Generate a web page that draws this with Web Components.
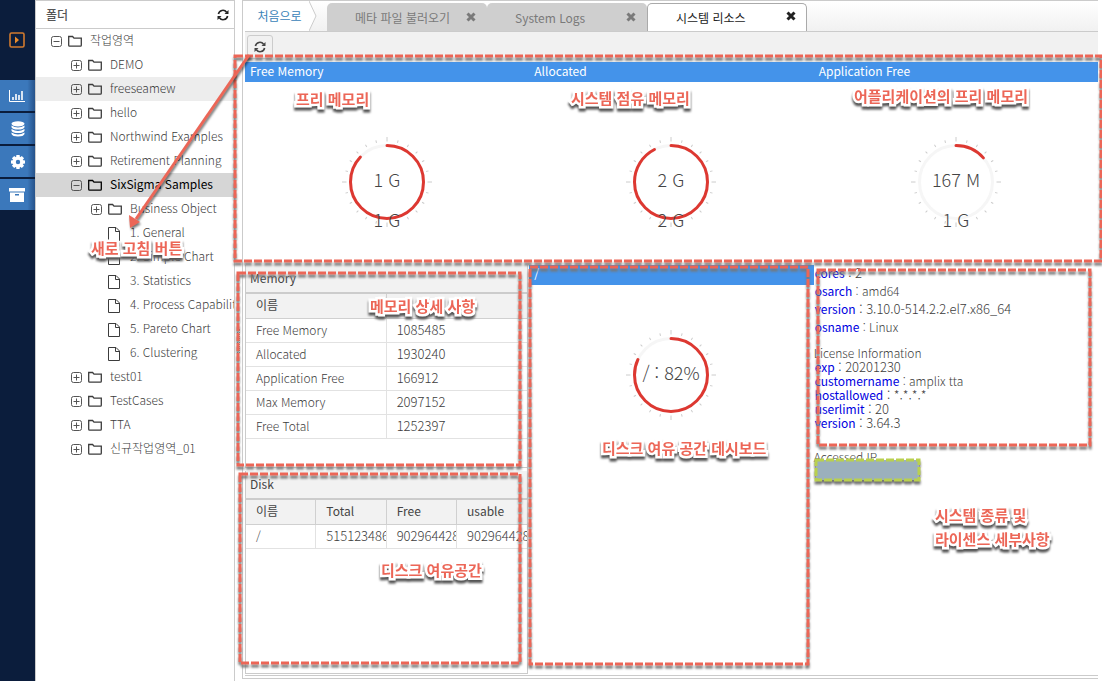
<!DOCTYPE html>
<html lang="ko">
<head>
<meta charset="utf-8">
<title>시스템 리소스</title>
<style>
html, body { margin: 0; height: 100%; }
body {
  font: 12px/18px "Noto Sans CJK KR", sans-serif;
  font-weight: 300;
  color: #3c3c3c;
  background: #fff;
  overflow: hidden;
  --line: #cbcbcb;
  --blue: #4493ea;
}
</style>
</head>
<body>
<app-shell>
  <nav-rail slot="rail"></nav-rail>
  <folder-panel slot="side">
    <tree-row level="0" open>작업영역</tree-row>
    <tree-row level="1">DEMO</tree-row>
    <tree-row level="1" hovered>freeseamew</tree-row>
    <tree-row level="1">hello</tree-row>
    <tree-row level="1">Northwind Examples</tree-row>
    <tree-row level="1">Retirement Planning</tree-row>
    <tree-row level="1" open selected>SixSigma Samples</tree-row>
    <tree-row level="2">Business Object</tree-row>
    <tree-row level="2" file>1. General</tree-row>
    <tree-row level="2" file>2. Simple Chart</tree-row>
    <tree-row level="2" file>3. Statistics</tree-row>
    <tree-row level="2" file>4. Process Capability</tree-row>
    <tree-row level="2" file>5. Pareto Chart</tree-row>
    <tree-row level="2" file>6. Clustering</tree-row>
    <tree-row level="1">test01</tree-row>
    <tree-row level="1">TestCases</tree-row>
    <tree-row level="1">TTA</tree-row>
    <tree-row level="1">신규작업영역_01</tree-row>
  </folder-panel>
  <tab-strip slot="tabs">
    <tab-item>메타 파일 불러오기</tab-item>
    <tab-item>System Logs</tab-item>
    <tab-item active>시스템 리소스</tab-item>
  </tab-strip>
  <tool-bar slot="tools"></tool-bar>
  <resource-view slot="view">
    <gauge-card slot="top" heading="Free Memory" value="0.87" main="1 G" sub="1 G"></gauge-card>
    <gauge-card slot="top" heading="Allocated" value="0.925" main="2 G" sub="2 G"></gauge-card>
    <gauge-card slot="top" heading="Application Free" value="0.135" main="167 M" sub="1 G"></gauge-card>
    <data-panel slot="left" class="memory" heading="Memory" columns="이름|" widths="50|50"
      rows="Free Memory|1085485;Allocated|1930240;Application Free|166912;Max Memory|2097152;Free Total|1252397"></data-panel>
    <data-panel slot="left" class="disk" heading="Disk" columns="이름|Total|Free|usable" widths="25|25|25|25"
      rows="/|51512348672|9029644288|9029644288"></data-panel>
    <gauge-card slot="middle" class="disk" heading="/" value="0.82" main="/ : 82%"></gauge-card>
    <system-info slot="right"></system-info>
  </resource-view>
  <note-layer slot="notes"></note-layer>
</app-shell>

<script>
function define(name, html, setup) {
  const template = document.createElement('template');
  template.innerHTML = html;
  customElements.define(name, class extends HTMLElement {
    constructor() {
      super();
      this.attachShadow({ mode: 'open' }).append(template.content.cloneNode(true));
    }
    connectedCallback() {
      if (setup && !this.ready) { this.ready = true; setup(this, this.shadowRoot); }
    }
  });
}

const refresh = `<svg width="12" height="12" viewBox="0 0 12 12" fill="none" stroke="currentColor" stroke-width="1.6" aria-hidden="true">
  <path d="M1.4 5A4.6 4.6 0 0 1 9.6 3.2M10.6 7A4.6 4.6 0 0 1 2.4 8.8"/>
  <path d="M11.5 1V5H7.5ZM.5 11V7H4.5Z" fill="currentColor" stroke="none"/></svg>`;

define('app-shell', `
<style>
:host { display: flex; position: relative; height: 100vh; overflow: hidden; }
.split { width: 7px; flex: none; display: flex; align-items: center; justify-content: center; }
.split i { width: 1px; height: 24px; border-left: 1px dotted #888; border-right: 1px dotted #888; }
main { flex: 1; min-width: 0; display: flex; flex-direction: column; box-sizing: border-box;
  border: 1px solid var(--line); border-right: 0; padding: 0 0 2px 2px; margin: 0 4px 2px 0; }
.view { flex: 1; min-height: 0; display: flex; border-bottom: 1px solid var(--line); }
</style>
<slot name="rail"></slot>
<slot name="side"></slot>
<div class="split"><i></i></div>
<main>
  <slot name="tabs"></slot>
  <slot name="tools"></slot>
  <div class="view"><slot name="view"></slot></div>
</main>
<slot name="notes"></slot>`);

define('nav-rail', `
<style>
:host { display: block; width: 35px; flex: none; background: #0b1d3c; }
nav { display: flex; flex-direction: column; gap: 2px; }
button { display: flex; align-items: center; justify-content: center; width: 100%; height: 31px; border: 0; padding: 0;
  color: #fff; background: linear-gradient(90deg, #3b78bb 0 78%, #26528a 100%); }
svg[width="16"] { margin-right: 1px; }
.run { height: 80px; background: none; margin-bottom: -2px; }
</style>
<nav aria-label="메뉴">
  <button class="run" aria-label="실행"><svg width="16" height="16" fill="none" stroke="#d17a2e" stroke-width="1.6"><rect x="1" y="1" width="14" height="14" rx="1.5"/><path d="M6 4.5V11.5L10 8Z" fill="#e88a2c" stroke="none"/></svg></button>
  <button aria-label="차트"><svg width="16" height="14" fill="none" stroke="#fff" stroke-width="1"><path d="M.5 1V12.5H16"/><path stroke-width="1.6" d="M4 8V11M7 5V11M10 6V11M13 2V11"/></svg></button>
  <button aria-label="데이터"><svg width="14" height="16" fill="#fff"><ellipse cx="7" cy="2.8" rx="6.5" ry="2.6"/><path d="M.5 4.4Q7 8.4 13.5 4.4V6.3Q12.5 8.6 7 8.6T.5 6.3ZM.5 7.9Q7 11.9 13.5 7.9V9.8Q12.5 12.1 7 12.1T.5 9.8ZM.5 11.4Q7 15.4 13.5 11.4V13.1Q12.5 15.6 7 15.6T.5 13.1Z"/></svg></button>
  <button aria-label="설정"><svg width="14" height="14" viewBox="-7 -7 14 14"><g fill="#fff"><path d="M-1.6 -7H1.6L2 -4H-2Z"/><path d="M-1.6 -7H1.6L2 -4H-2Z" transform="rotate(45)"/><path d="M-1.6 -7H1.6L2 -4H-2Z" transform="rotate(90)"/><path d="M-1.6 -7H1.6L2 -4H-2Z" transform="rotate(135)"/><path d="M-1.6 -7H1.6L2 -4H-2Z" transform="rotate(180)"/><path d="M-1.6 -7H1.6L2 -4H-2Z" transform="rotate(225)"/><path d="M-1.6 -7H1.6L2 -4H-2Z" transform="rotate(270)"/><path d="M-1.6 -7H1.6L2 -4H-2Z" transform="rotate(315)"/></g><circle r="3.7" fill="none" stroke="#fff" stroke-width="3"/></svg></button>
  <button aria-label="보관함"><svg width="16" height="14" fill="#fff"><path d="M0 0H16V3.5H0ZM1 4.5H15V14H1ZM6 6V7.5H10V6Z" fill-rule="evenodd"/></svg></button>
</nav>`);

define('folder-panel', `
<style>
:host { display: flex; flex-direction: column; box-sizing: border-box; width: 200px; flex: none; overflow: hidden;
  border: 1px solid var(--line); border-width: 1px 1px 0 1px; }
header { display: flex; align-items: center; justify-content: space-between; height: 27px; flex: none;
  padding: 0 5px 0 10px; border-bottom: 1px solid var(--line); }
h2 { margin: 0; font-size: 12px; font-weight: 500; color: #555; }
button { display: flex; border: 0; padding: 0; background: none; color: #222; }
</style>
<header><h2>폴더</h2><button aria-label="새로 고침">${refresh}</button></header>
<div role="tree"><slot></slot></div>`);

define('tree-row', `
<style>
:host { display: flex; align-items: center; height: 24px; box-sizing: border-box; padding-left: 14px; white-space: nowrap; }
:host([level="1"]) { padding-left: 34px; }
:host([level="2"]) { padding-left: 54px; }
:host([hovered]) { background: #ededed; }
:host([selected]) { background: #d6d6d6; color: #000; font-weight: 400; }
button { display: flex; width: 12px; height: 12px; border: 0; padding: 0; margin: 2px 6px 0 0; background: none; color: #555; }
svg { flex: none; }
.folder { width: 14px; margin-right: 8px; }
.page { display: none; width: 14px; margin: 2px 8px 0 18px; }
:host([file]) button, :host([file]) .folder, :host([open]) .v { display: none; }
:host([file]) .page { display: block; }
span { padding-bottom: 2px; }
</style>
<button aria-label="펼치기"><svg width="12" height="12" fill="none" stroke="currentColor"><rect x="1.5" y=".5" width="10" height="10" rx="2"/><path d="M3.5 5.5H9.5"/><path class="v" d="M6.5 2.5V8.5"/></svg></button>
<svg class="folder" height="12" viewBox="0 0 14 12" fill="none" stroke="currentColor" stroke-width="1.3"><path d="M.7 10.3V1.5H4.6L6 3.2H13.3V10.3Q13.3 11.2 12.4 11.2H1.6Q.7 11.2 .7 10.3Z"/></svg>
<svg class="page" height="14" viewBox="0 0 14 14" fill="none" stroke="currentColor"><path d="M.5 .5H8L11.5 4V13.5H.5ZM7.5 .5V4.5H11.5"/></svg>
<span role="treeitem"><slot></slot></span>`);

define('tab-strip', `
<style>
:host { display: flex; align-items: flex-end; height: 30px; flex: none; border-bottom: 1px solid var(--line);
  background: linear-gradient(#fff, #f1f1f1); }
a { display: flex; align-items: center; justify-content: center; align-self: stretch; width: 64px; padding-left: 5px;
  box-sizing: border-box; background: #fff; color: #3a83b8; font-weight: 400; text-decoration: none; }
svg { flex: none; width: 8px; height: 30px; margin-right: 10px; }
</style>
<a href="#">처음으로</a>
<svg fill="#fff" stroke="#ccc"><path d="M0 0L7 15L0 30"/></svg>
<slot></slot>`);

define('tab-item', `
<style>
:host { display: flex; align-items: center; box-sizing: border-box; width: 160px; height: 28px; padding: 2px 9px 0 0;
  border-radius: 5px 5px 0 0; background: #cfcfcf; color: #7a7a7a; font-weight: 400; }
:host([active]) { background: #fff; color: #222; border: 1px solid #aaa; border-bottom: 0; padding: 0 8px 0 0; }
span { flex: 1; padding-left: 28px; }
button { display: flex; border: 0; padding: 0 2px 3px 0; background: none; color: inherit; }
</style>
<span><slot></slot></span>
<button aria-label="닫기"><svg width="10" height="10" stroke="currentColor" stroke-width="3"><path d="M1.5 1.5L8.5 8.5M8.5 1.5L1.5 8.5"/></svg></button>`);

define('tool-bar', `
<style>
:host { display: flex; height: 30px; flex: none; background: #f1f1f1; padding: 0 2px; }
button { display: flex; align-items: center; justify-content: center; width: 26px; height: 24px; margin-top: 3px; padding: 0;
  border: 1px solid #ccc; border-radius: 3px; background: #f1f1f1; color: #444; }
</style>
<button aria-label="새로 고침">${refresh}</button>`);

define('resource-view', `
<style>
:host { flex: 1; min-width: 0; display: grid; grid-template: 203px minmax(0, 1fr) / repeat(3, minmax(0, 1fr)); }
.left { display: flex; flex-direction: column; gap: 3px; margin: 0 1px 1px 0; border-right: 1px solid var(--line); border-bottom: 1px solid var(--line); }
</style>
<slot name="top"></slot>
<div class="left"><slot name="left"></slot></div>
<slot name="middle"></slot>
<slot name="right"></slot>`);

define('gauge-card', `
<style>
:host { display: block; min-width: 0; }
h3 { margin: 0; height: 20px; line-height: 18px; padding-left: 5px; background: var(--blue); color: #fff; font-size: 12px; font-weight: 400; }
figure { display: flex; justify-content: center; margin: 54px 0 0; }
:host(.disk) figure { margin-top: 44px; }
svg { width: 92px; height: 92px; overflow: visible; }
text { font-size: 18px; fill: #444; text-anchor: middle; }
</style>
<h3></h3>
<figure><svg viewBox="-46 -46 92 92" fill="none">
  <g class="ticks" stroke="#ccc"></g>
  <circle r="36.5" stroke="#f6f6f6" stroke-width="3"/>
  <circle class="arc" r="36.5" stroke="#dd3831" stroke-width="3" stroke-linecap="round" pathLength="100" transform="rotate(-90)"/>
  <text class="main" y="5"></text><text class="sub" y="45"></text>
</svg></figure>`, (host, root) => {
  root.querySelector('h3').textContent = host.getAttribute('heading');
  root.querySelector('.main').textContent = host.getAttribute('main');
  root.querySelector('.sub').textContent = host.getAttribute('sub') || '';
  root.querySelector('.arc').setAttribute('stroke-dasharray', host.getAttribute('value') * 100 + ' 100');
  let ticks = '';
  for (let a = 0; a < 360; a += 15) ticks += `<path d="M0 -40.5V${a % 90 ? -43 : -45}" transform="rotate(${a})"/>`;
  root.querySelector('.ticks').innerHTML = ticks;
});

define('data-panel', `
<style>
:host { display: block; overflow: hidden; box-sizing: border-box; border-left: 1px solid var(--line); }
:host(.memory) { height: 203px; flex: none; border-bottom: 1px solid var(--line); }
:host(.disk) { flex: 1; }
h3 { margin: 0; height: 27px; box-sizing: border-box; line-height: 26px; padding-left: 4px; background: #f2f2f2; color: #444; font-size: 12px; font-weight: 400; }
table { width: 100%; table-layout: fixed; border-spacing: 0; border-top: 2px solid #ccc; }
th, td { box-sizing: border-box; height: 24px; padding: 0 0 2px 10px; line-height: 18px; text-align: left; font-weight: inherit; white-space: nowrap;
  overflow: hidden; border: solid #e2e2e2; border-width: 0 1px 1px 0; }
th { background: #f2f2f2; border-color: #d0d0d0; color: #444; height: 25px; font-weight: 400; }
td + td { font-size: 13px; }
th:last-child, td:last-child { border-right: 0; }
</style>
<h3></h3>
<table><colgroup></colgroup><thead><tr></tr></thead><tbody></tbody></table>`, (host, root) => {
  const list = (name) => host.getAttribute(name).split('|');
  root.querySelector('h3').textContent = host.getAttribute('heading');
  root.querySelector('colgroup').innerHTML = list('widths').map((w) => `<col style="width:${w}%">`).join('');
  root.querySelector('thead tr').innerHTML = list('columns').map((c) => `<th scope="col">${c}</th>`).join('');
  root.querySelector('tbody').innerHTML = host.getAttribute('rows').split(';')
    .map((r) => `<tr>${r.split('|').map((c) => `<td>${c}</td>`).join('')}</tr>`).join('');
});

define('system-info', `
<style>
:host { display: block; min-width: 0; }
p { margin: 0; line-height: 14px; }
dl { margin: 0; padding-left: 1px; line-height: 14px; }
.os { line-height: 18px; margin-top: -1px; }
dl div { display: flex; white-space: pre; }
dd { margin: 0; }
dd.num { font-size: 13px; }
dt { color: #0000e0; font-weight: 400; }
.title { margin-top: 10px; }
.ip { margin-top: 20px; }
</style>
<dl class="os">
  <div><dt>cores</dt><dd class="num"> : 2</dd></div>
  <div><dt>osarch</dt><dd> : amd64</dd></div>
  <div><dt>version</dt><dd class="num"> : 3.10.0-514.2.2.el7.x86_64</dd></div>
  <div><dt>osname</dt><dd> : Linux</dd></div>
</dl>
<p class="title">License Information</p>
<dl>
  <div><dt>exp</dt><dd class="num"> : 20201230</dd></div>
  <div><dt>customername</dt><dd> : amplix tta</dd></div>
  <div><dt>hostallowed</dt><dd class="num"> : *.*.*.*</dd></div>
  <div><dt>userlimit</dt><dd class="num"> : 20</dd></div>
  <div><dt>version</dt><dd class="num"> : 3.64.3</dd></div>
</dl>
<p class="ip">Accessed IP</p>`);

define('note-layer', `
<style>
:host { position: absolute; inset: 0; pointer-events: none; }
svg { position: absolute; inset: 0; width: 100%; height: 100%; }
.box { fill: none; stroke: #ec6657; stroke-width: 3; stroke-dasharray: 8 2; filter: drop-shadow(0 3px 1px #777); }
.arrow { filter: drop-shadow(1px 2px 1px #0008); }
span { position: absolute; white-space: nowrap; font-size: 15px; font-weight: 700; line-height: 24px; color: #ec6657;
  -webkit-text-stroke: 5px #fff; paint-order: stroke fill; filter: drop-shadow(0 3px 1px #555); }
</style>
<svg aria-hidden="true">
  <rect class="box" x="235" y="56" width="866" height="205"/>
  <rect class="box" x="238" y="273" width="282" height="192"/>
  <rect class="box" x="240" y="474" width="280" height="189"/>
  <rect class="box" x="530" y="267" width="278" height="397"/>
  <rect class="box" x="818" y="270" width="272" height="175"/>
  <rect class="box" x="816" y="460" width="103" height="20" style="fill:#9bb0bc;stroke:#b9d04f"/>
  <g class="arrow" fill="#ec6657"><path d="M249 55L136 219" stroke="#ec6657" stroke-width="3"/><path d="M130 228L129 215L140 222Z"/></g>
</svg>
<span style="left:296px;top:87px">프리 메모리</span>
<span style="left:571px;top:86px">시스템 점유 메모리</span>
<span style="left:854px;top:84px">어플리케이션의 프리 메모리</span>
<span style="left:91px;top:236px">새로 고침 버튼</span>
<span style="left:370px;top:294px">메모리 상세 사항</span>
<span style="left:381px;top:558px">디스크 여유공간</span>
<span style="left:602px;top:436px">디스크 여유 공간 데시보드</span>
<span style="left:935px;top:503px">시스템 종류 및<br>라이센스 세부사항</span>`);
</script>
</body>
</html>
